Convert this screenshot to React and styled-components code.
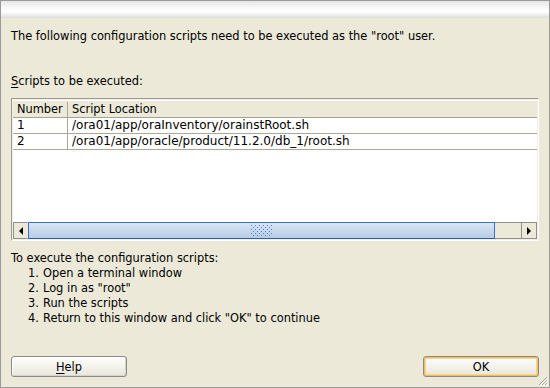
import React from 'react';
import styled, { createGlobalStyle } from 'styled-components';

/* -------------------------  STYLES ------------------------- */

const GlobalStyle = createGlobalStyle`
  html, body {
    margin: 0;
    padding: 0;
    background: #ece9d8;
  }
`;

const Window = styled.div`
  position: relative;
  box-sizing: border-box;
  width: 550px;
  height: 388px;
  display: flex;
  flex-direction: column;
  border: 1px solid #9a9a9a;
  background: #ece9d8;
  font-family: "DejaVu Sans", "Liberation Sans", sans-serif;
  font-size: 11.4px;
  line-height: 15px;
  color: #000;
`;

const TitleStrip = styled.div`
  flex-shrink: 0;
  height: 17px;
  background: linear-gradient(#e6e6e6, #f9f9f9 40%, #ffffff 62%, #dedede);
`;

const Content = styled.div`
  flex: 1;
  display: flex;
  flex-direction: column;
  padding: 11px 10px 10px;
`;

const Message = styled.p`
  margin: 0;
  white-space: nowrap;
`;

const SectionLabel = styled.p`
  margin: 30px 0 9px;
`;

const Mnemonic = styled.span`
  text-decoration: underline;
  text-underline-offset: 2px;
`;

const ScrollPane = styled.div`
  box-sizing: border-box;
  height: 143px;
  display: flex;
  flex-direction: column;
  padding: 1px;
  border: 1px solid;
  border-color: #9d9a8c #ffffff #ffffff #9d9a8c;
  background: #f1efe6;
`;

const Viewport = styled.div`
  flex: 1;
  background: #fff;
  overflow: hidden;
`;

const HeaderRow = styled.div`
  display: flex;
  box-sizing: border-box;
  height: 18px;
  padding-top: 1px;
  border-top: 1px solid #fff;
  border-bottom: 1px solid #a5a28f;
  background: #ece9d8;
`;

const Row = styled.div`
  display: flex;
  box-sizing: border-box;
  height: 16px;
  border-bottom: 1px solid #aca899;
  font-size: 12px;
`;

const Cell = styled.div`
  box-sizing: border-box;
  flex: ${(p) => (p.$w ? 'none' : 1)};
  width: ${(p) => (p.$w ? `${p.$w}px` : 'auto')};
  padding-left: 4px;
  border-right: ${(p) => (p.$w ? '1px solid #aca899' : 'none')};
  white-space: nowrap;
  overflow: hidden;
`;

const HScrollBar = styled.div`
  flex-shrink: 0;
  display: flex;
  height: 17px;
`;

const ArrowButton = styled.div`
  box-sizing: border-box;
  flex: none;
  width: ${(p) => p.$w}px;
  display: flex;
  align-items: center;
  justify-content: center;
  border: 1px solid #8e8f8f;
  border-right-color: ${(p) => (p.$dir === 'left' ? 'transparent' : '#8e8f8f')};
  background: #ece9d8;

  &::before {
    content: '';
    border-style: solid;
    border-color: transparent;
    border-width: 4px ${(p) => (p.$dir === 'left' ? '4px 4px 0' : '0 4px 4px')};
    ${(p) => (p.$dir === 'left' ? 'border-right-color: #000;' : 'border-left-color: #000;')}
  }
`;

const Thumb = styled.div`
  box-sizing: border-box;
  flex: 1;
  display: flex;
  align-items: center;
  justify-content: center;
  border: 1px solid #3a6fd0;
  border-bottom-color: #2f5da9;
  background: linear-gradient(#dbe6f4, #c6d7ec 55%, #b8cce6);
`;

const Track = styled.div`
  box-sizing: border-box;
  flex: none;
  width: 26px;
  border-top: 1px solid #8e8f8f;
  border-bottom: 1px solid #8e8f8f;
  background: #ece9d8;
`;

const Steps = styled.div`
  margin-top: 10px;
`;

const Step = styled.div`
  display: flex;
  padding-left: 17px;
`;

const StepNum = styled.span`
  flex: none;
  width: 15px;
`;

const ButtonBar = styled.div`
  margin-top: auto;
  display: flex;
  justify-content: space-between;
`;

const Button = styled.button`
  box-sizing: border-box;
  width: 116px;
  height: 21px;
  padding: 0;
  border: 1px solid #8a8a8a;
  border-radius: 3px;
  background: linear-gradient(#fefefd, #f4f3ee 45%, #e8e6da);
  box-shadow: ${(p) =>
    p.$default
      ? 'inset 0 0 0 1px #f3bd5c, inset 0 0 0 2px #f9d594'
      : 'inset -1px -1px 0 #d9d5c6, inset 1px 1px 0 #ffffff'};
  font-family: inherit;
  font-size: 11.4px;
  color: #000;
`;

const Grip = styled.svg`
  position: absolute;
  right: 1px;
  bottom: 1px;
`;

/* -------------------------  RENDER ------------------------- */

const GripDots = () => {
  const dots = [];
  for (let r = 0; r < 6; r += 1) {
    for (let c = 0; c < 6; c += 1) {
      const x = c * 4 + (r % 2 ? 2 : 0);
      if (x < 22) dots.push(<rect key={`${r}-${c}`} x={x} y={r * 2} width="1" height="1" fill="#4a7fd6" />);
    }
  }
  return (
    <svg width="22" height="11" viewBox="0 0 22 11">
      {dots}
    </svg>
  );
};

const scripts = [
  { n: 1, path: '/ora01/app/oraInventory/orainstRoot.sh' },
  { n: 2, path: '/ora01/app/oracle/product/11.2.0/db_1/root.sh' },
];

const steps = [
  'Open a terminal window',
  'Log in as "root"',
  'Run the scripts',
  'Return to this window and click "OK" to continue',
];

const App = () => (
  <>
    <GlobalStyle />
    <Window>
      <TitleStrip />
      <Content>
        <Message>The following configuration scripts need to be executed as the "root" user.</Message>
        <SectionLabel>
          <Mnemonic>S</Mnemonic>cripts to be executed:
        </SectionLabel>
        <ScrollPane>
          <Viewport>
            <HeaderRow>
              <Cell $w={55}>Number</Cell>
              <Cell>Script Location</Cell>
            </HeaderRow>
            {scripts.map((s) => (
              <Row key={s.n}>
                <Cell $w={55}>{s.n}</Cell>
                <Cell>{s.path}</Cell>
              </Row>
            ))}
          </Viewport>
          <HScrollBar>
            <ArrowButton $w={15} $dir="left" />
            <Thumb>
              <GripDots />
            </Thumb>
            <Track />
            <ArrowButton $w={16} $dir="right" />
          </HScrollBar>
        </ScrollPane>
        <Steps>
          <div>To execute the configuration scripts:</div>
          {steps.map((text, i) => (
            <Step key={text}>
              <StepNum>{i + 1}.</StepNum>
              <span>{text}</span>
            </Step>
          ))}
        </Steps>
        <ButtonBar>
          <Button>
            <Mnemonic>H</Mnemonic>elp
          </Button>
          <Button $default>OK</Button>
        </ButtonBar>
      </Content>
      <Grip width="10" height="10" viewBox="0 0 10 10">
        <path d="M9 1 L1 9 M9 4 L4 9 M9 7 L7 9" stroke="#a3a3a3" strokeWidth="1" />
        <path d="M10 2 L2 10 M10 5 L5 10 M10 8 L8 10" stroke="#ffffff" strokeWidth="1" />
      </Grip>
    </Window>
  </>
);

export default App;
